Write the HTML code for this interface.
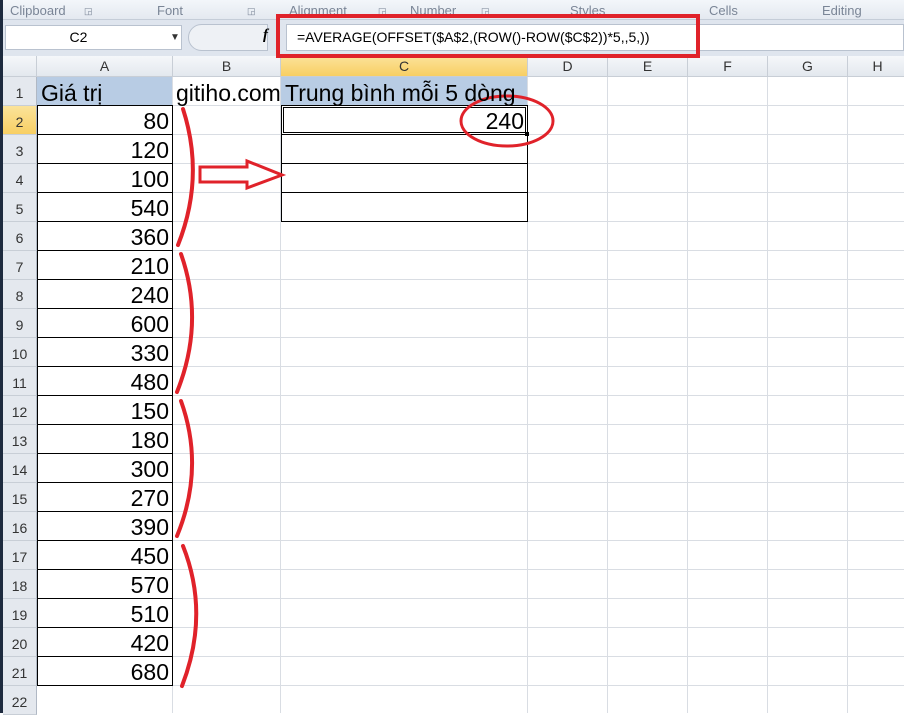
<!DOCTYPE html>
<html><head><meta charset="utf-8"><style>
*{margin:0;padding:0;box-sizing:border-box}
body{width:904px;height:713px;overflow:hidden;background:#fff;font-family:"Liberation Sans",Arial,sans-serif;position:relative}
.abs{position:absolute}
.rib{left:0;top:0;width:904px;height:20px;background:linear-gradient(#f3f6fa,#e4e9f0);border-bottom:1px solid #c5cdd8;color:#7a8596;font-size:13px}
.rib span{position:absolute;top:3px}
.fbar{left:0;top:20px;width:904px;height:36px;background:#dfe5ee}
.hdr{background:linear-gradient(#f5f7fa,#e3e8ee);border-right:1px solid #c8ced6;border-bottom:1px solid #c8ced6;color:#333;font-size:14px;text-align:center}
.rh{left:3px;width:34px;height:29px;background:#e4e8ee;border-bottom:1px solid #c8ced6;border-right:1px solid #b0b8c4;color:#333;font-size:14px;text-align:center;line-height:33px}
.num{font-size:23px;text-align:right;line-height:31px;height:29px;color:#000}
</style></head><body>
<div class="abs rib">
<span style="left:10px">Clipboard</span><span style="left:84px;font-size:9px;top:6px">◲</span>
<span style="left:157px">Font</span><span style="left:247px;font-size:9px;top:6px">◲</span>
<span style="left:289px">Alignment</span><span style="left:378px;font-size:9px;top:6px">◲</span>
<span style="left:410px">Number</span><span style="left:481px;font-size:9px;top:6px">◲</span>
<span style="left:570px">Styles</span><span style="left:709px">Cells</span><span style="left:822px">Editing</span>
</div>
<div class="abs fbar"></div>
<div class="abs" style="left:5px;top:25px;width:177px;height:25px;background:#fff;border:1px solid #b9c2cf;font-size:14px;line-height:23px;text-align:center;padding-right:30px">C2</div>
<div class="abs" style="left:170px;top:32px;font-size:10px;color:#333">▼</div>
<div class="abs" style="left:188px;top:24px;width:80px;height:27px;border:1px solid #b9c2cf;border-radius:14px 0 0 14px;background:#eef1f5"></div>
<div class="abs" style="left:263px;top:27px;font-style:italic;font-weight:bold;font-size:15px;font-family:'Liberation Serif',serif">f</div>
<div class="abs" style="left:286px;top:24px;width:618px;height:27px;background:#fff;border:1px solid #b9c2cf;font-size:14px;line-height:25px;padding-left:10px">=AVERAGE(OFFSET($A$2,(ROW()-ROW($C$2))*5,,5,))</div>
<div class="abs" style="left:0;top:0;width:3px;height:713px;background:#1d2a3e"></div>
<div class="abs hdr" style="left:3px;top:56px;width:34px;height:21px"></div>
<div class="abs hdr" style="left:37px;top:56px;width:136px;height:21px;line-height:21px">A</div>
<div class="abs hdr" style="left:173px;top:56px;width:108px;height:21px;line-height:21px">B</div>
<div class="abs hdr" style="left:281px;top:56px;width:247px;height:21px;line-height:21px;background:linear-gradient(#fbe39a,#f8cf63)">C</div>
<div class="abs hdr" style="left:528px;top:56px;width:80px;height:21px;line-height:21px">D</div>
<div class="abs hdr" style="left:608px;top:56px;width:80px;height:21px;line-height:21px">E</div>
<div class="abs hdr" style="left:688px;top:56px;width:80px;height:21px;line-height:21px">F</div>
<div class="abs hdr" style="left:768px;top:56px;width:80px;height:21px;line-height:21px">G</div>
<div class="abs hdr" style="left:848px;top:56px;width:60px;height:21px;line-height:21px">H</div>
<svg class="abs" style="left:0;top:0" width="904" height="713">
<g stroke="#d9dde3" stroke-width="1">
<line x1="172.5" y1="77" x2="172.5" y2="713"/><line x1="280.5" y1="77" x2="280.5" y2="713"/><line x1="527.5" y1="77" x2="527.5" y2="713"/><line x1="607.5" y1="77" x2="607.5" y2="713"/><line x1="687.5" y1="77" x2="687.5" y2="713"/><line x1="767.5" y1="77" x2="767.5" y2="713"/><line x1="847.5" y1="77" x2="847.5" y2="713"/>
<line x1="37" y1="105.5" x2="904" y2="105.5"/><line x1="37" y1="134.5" x2="904" y2="134.5"/><line x1="37" y1="163.5" x2="904" y2="163.5"/><line x1="37" y1="192.5" x2="904" y2="192.5"/><line x1="37" y1="221.5" x2="904" y2="221.5"/><line x1="37" y1="250.5" x2="904" y2="250.5"/><line x1="37" y1="279.5" x2="904" y2="279.5"/><line x1="37" y1="308.5" x2="904" y2="308.5"/><line x1="37" y1="337.5" x2="904" y2="337.5"/><line x1="37" y1="366.5" x2="904" y2="366.5"/><line x1="37" y1="395.5" x2="904" y2="395.5"/><line x1="37" y1="424.5" x2="904" y2="424.5"/><line x1="37" y1="453.5" x2="904" y2="453.5"/><line x1="37" y1="482.5" x2="904" y2="482.5"/><line x1="37" y1="511.5" x2="904" y2="511.5"/><line x1="37" y1="540.5" x2="904" y2="540.5"/><line x1="37" y1="569.5" x2="904" y2="569.5"/><line x1="37" y1="598.5" x2="904" y2="598.5"/><line x1="37" y1="627.5" x2="904" y2="627.5"/><line x1="37" y1="656.5" x2="904" y2="656.5"/><line x1="37" y1="685.5" x2="904" y2="685.5"/>
</g>
<rect x="37" y="77" width="135" height="28" fill="#b8cce4"/>
<rect x="281" y="77" width="246" height="28" fill="#b8cce4"/>
<g stroke="#000" stroke-width="1" fill="none">
<rect x="37.5" y="105.5" width="135" height="580"/>
<line x1="37" y1="134.5" x2="173" y2="134.5"/><line x1="37" y1="163.5" x2="173" y2="163.5"/><line x1="37" y1="192.5" x2="173" y2="192.5"/><line x1="37" y1="221.5" x2="173" y2="221.5"/><line x1="37" y1="250.5" x2="173" y2="250.5"/><line x1="37" y1="279.5" x2="173" y2="279.5"/><line x1="37" y1="308.5" x2="173" y2="308.5"/><line x1="37" y1="337.5" x2="173" y2="337.5"/><line x1="37" y1="366.5" x2="173" y2="366.5"/><line x1="37" y1="395.5" x2="173" y2="395.5"/><line x1="37" y1="424.5" x2="173" y2="424.5"/><line x1="37" y1="453.5" x2="173" y2="453.5"/><line x1="37" y1="482.5" x2="173" y2="482.5"/><line x1="37" y1="511.5" x2="173" y2="511.5"/><line x1="37" y1="540.5" x2="173" y2="540.5"/><line x1="37" y1="569.5" x2="173" y2="569.5"/><line x1="37" y1="598.5" x2="173" y2="598.5"/><line x1="37" y1="627.5" x2="173" y2="627.5"/><line x1="37" y1="656.5" x2="173" y2="656.5"/>
<rect x="281.5" y="105.5" width="246" height="116"/>
<line x1="281" y1="134.5" x2="528" y2="134.5"/><line x1="281" y1="163.5" x2="528" y2="163.5"/><line x1="281" y1="192.5" x2="528" y2="192.5"/>
<rect x="283.5" y="107.5" width="242" height="25"/>
</g>
<rect x="525" y="132" width="4" height="4" fill="#000"/>
<g stroke="#e0222a" stroke-width="4" fill="none" stroke-linecap="round">
<rect x="278" y="16" width="420" height="40" stroke-width="4" stroke-linecap="butt"/>
<ellipse cx="507" cy="121" rx="46" ry="25" stroke-width="3"/>
<path d="M183 109 Q205 177 178 245"/>
<path d="M181 254 Q205 322 177 392"/>
<path d="M181 401 Q205 468 177 536"/>
<path d="M183 546 Q210 614 182 686"/>
<path d="M200 167 L247 167 L247 161 L282 175 L247 188 L247 182 L200 182 Z" stroke-width="3" stroke-linejoin="miter"/>
</g>
</svg>
<div class="abs" style="left:41px;top:78px;font-size:23px;line-height:31px">Giá trị</div>
<div class="abs" style="left:176px;top:78px;font-size:23px;line-height:31px;white-space:nowrap">gitiho.com</div>
<div class="abs" style="left:285px;top:78px;font-size:23px;line-height:31px;white-space:nowrap">Trung bình mỗi 5 dòng</div>
<div class="abs num" style="left:380px;top:106px;width:144px">240</div>
<div class="abs" style="left:37px;top:106px;width:132px">
<div class="num">80</div><div class="num">120</div><div class="num">100</div><div class="num">540</div><div class="num">360</div><div class="num">210</div><div class="num">240</div><div class="num">600</div><div class="num">330</div><div class="num">480</div><div class="num">150</div><div class="num">180</div><div class="num">300</div><div class="num">270</div><div class="num">390</div><div class="num">450</div><div class="num">570</div><div class="num">510</div><div class="num">420</div><div class="num">680</div>
</div>
<div class="abs rh" style="top:77px">1</div>
<div class="abs rh" style="top:106px;background:linear-gradient(#fbe39a,#f8cf63)">2</div>
<div class="abs rh" style="top:135px">3</div><div class="abs rh" style="top:164px">4</div><div class="abs rh" style="top:193px">5</div><div class="abs rh" style="top:222px">6</div><div class="abs rh" style="top:251px">7</div><div class="abs rh" style="top:280px">8</div><div class="abs rh" style="top:309px">9</div><div class="abs rh" style="top:338px">10</div><div class="abs rh" style="top:367px">11</div><div class="abs rh" style="top:396px">12</div><div class="abs rh" style="top:425px">13</div><div class="abs rh" style="top:454px">14</div><div class="abs rh" style="top:483px">15</div><div class="abs rh" style="top:512px">16</div><div class="abs rh" style="top:541px">17</div><div class="abs rh" style="top:570px">18</div><div class="abs rh" style="top:599px">19</div><div class="abs rh" style="top:628px">20</div><div class="abs rh" style="top:657px">21</div><div class="abs rh" style="top:686px">22</div>
</body></html>
